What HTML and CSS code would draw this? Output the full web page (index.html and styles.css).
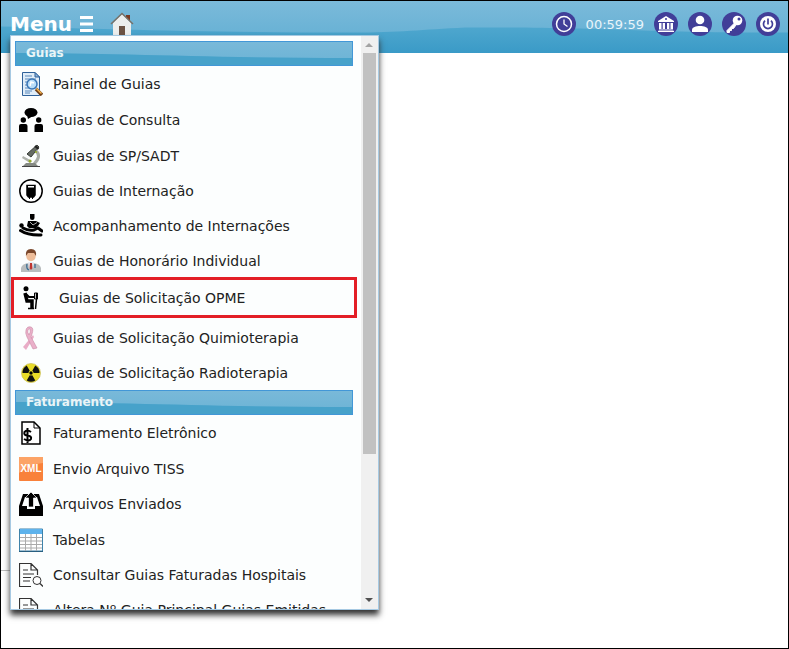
FILE: index.html
```html
<!DOCTYPE html>
<html lang="pt-BR">
<head>
    <meta charset="UTF-8">
    <meta name="viewport" content="width=device-width, initial-scale=1.0">
    <title>Menu</title>
    <link rel="stylesheet" href="styles.css">
</head>
<body>
<header class="topbar">
    <svg class="wave" viewBox="0 0 787 51" preserveAspectRatio="none" aria-hidden="true">
        <path d="M0 25C100 27 200 31 350 31C400 31 420 28 464 26C600 25 640 31 787 31V51H0Z" fill="url(#deep)"/>
        <defs>
            <linearGradient id="deep" gradientUnits="userSpaceOnUse" x1="0" y1="25" x2="0" y2="51">
                <stop offset="0" stop-color="#4fa7ce"/>
                <stop offset="1" stop-color="#3a9ac7"/>
            </linearGradient>
        </defs>
    </svg>
    <button class="menu-btn" type="button">Menu
        <svg width="13" height="16" viewBox="0 0 13 16"><path d="M0 1.5H13M0 8H13M0 14.5H13" stroke="#fff" stroke-width="3"/></svg>
    </button>
    <a class="home" href="#" aria-label="Home">
        <svg width="24" height="25" viewBox="0 0 24 25">
            <path d="M16 3H20V9L16 6Z" fill="#7b3a23"/>
            <path d="M3 11L12 2L21 11V25H3Z" fill="#eceeed"/>
            <path d="M1 12L12 1.500L23 12" fill="none" stroke="#777168" stroke-width="1.500"/>
            <path d="M9 14H15V25H9Z" fill="#6b5344"/>
        </svg>
    </a>
    <nav class="tools">
        <button type="button" class="round" aria-label="Tempo">
            <svg width="24" height="24" viewBox="0 0 24 24"><circle cx="12" cy="12" r="7.500" fill="none" stroke="#fff" stroke-width="1.500"/><path d="M12 7.500V12L15.500 14.500" fill="none" stroke="#fff" stroke-width="1.300"/></svg>
        </button>
        <span class="timer">00:59:59</span>
        <button type="button" class="round" aria-label="Empresa">
            <svg width="24" height="24" viewBox="0 0 24 24" fill="#fff"><path fill-rule="evenodd" d="M12 4L20 9V10H4V9ZM12 6A1 1 0 1 0 12 8A1 1 0 1 0 12 6Z"/><path d="M5 11H7.500V17H5ZM8.700 11H11V17H8.700ZM13 11H15.300V17H13ZM16.500 11H19V17H16.500ZM5 17.500H19V18.300H5ZM4 18.700H20V20H4Z"/></svg>
        </button>
        <button type="button" class="round" aria-label="Usuário">
            <svg width="24" height="24" viewBox="0 0 24 24" fill="#fff"><circle cx="12" cy="8" r="4.300"/><path d="M4 20V18C4 15 8 14 12 14S20 15 20 18V20Z"/></svg>
        </button>
        <button type="button" class="round" aria-label="Senha">
            <svg width="24" height="24" viewBox="0 0 24 24"><path d="M12.500 11L5 18.500V20.500H7.500V18.500H9.500V16.500H11.500L14 13" fill="#fff" stroke="#fff"/><circle cx="15.500" cy="8.500" r="4.800" fill="#fff"/><circle cx="17" cy="7" r="1.500" fill="#413e98"/></svg>
        </button>
        <button type="button" class="round" aria-label="Sair">
            <svg width="24" height="24" viewBox="0 0 24 24"><circle cx="12" cy="12" r="8" fill="#fff"/><path d="M9 8.700A4.500 4.500 0 1 0 15 8.700M12 6.500V12.500" fill="none" stroke="#413e98" stroke-width="1.700"/></svg>
        </button>
    </nav>
</header>
<hr class="edge">

<div class="panel">
    <div class="list">
        <h2 class="group"><svg class="wave" viewBox="0 0 338 23" preserveAspectRatio="none" aria-hidden="true"><path d="M0 11C100 11 200 16 338 16V23H0Z" fill="#47a2ca"/></svg><span>Guias</span></h2>
        <ul>
            <li><a class="item tall" href="#">
                <svg class="icon" viewBox="0 0 24 24"><path d="M3.500 .5H16L20.500 5V23.500H3.500Z" fill="#e0edf8" stroke="#2f6199"/><path d="M16 .5V5H20.500Z" fill="#8fb5dc" stroke="#2f6199"/><path d="M6 4H13M6 7H17M6 10H18M6 13H18M6 16H18M6 19H13M6 21H11" stroke="#5a89bb"/><circle cx="13" cy="12" r="5" fill="#b9ddf8" stroke="#3975b5" stroke-width="1.500"/><path d="M11 14L12 10L15 11" stroke="#fff" stroke-width="1.500" fill="none"/><path d="M17 17L23 23" stroke="#704019" stroke-width="3.500"/><path d="M17.500 16.500L22.500 21.500" stroke="#f6b34c" stroke-width="1.500"/></svg>
                Painel de Guias</a></li>
            <li><a class="item tall" href="#">
                <svg class="icon" viewBox="0 0 24 24"><ellipse cx="12" cy="4.500" rx="6.500" ry="4.500"/><path d="M8 7L9 11L14 8Z"/><circle cx="4.300" cy="12" r="2.700"/><circle cx="19.700" cy="12" r="2.700"/><path d="M0 24V18Q0 16 2 16H6.500Q8.500 16 8.500 18V24ZM15.500 24V18Q15.500 16 17.500 16H22Q24 16 24 18V24Z"/></svg>
                Guias de Consulta</a></li>
            <li><a class="item" href="#">
                <svg class="icon" viewBox="0 0 24 24"><path d="M18 1L20 3L12 13L8 10Z" fill="#666b65" stroke="#383d38"/><path d="M16 2L19.500 5" stroke="#222" stroke-width="2"/><path d="M17 7Q23 12 15 20" fill="none" stroke="#a8aca6" stroke-width="3"/><path d="M4 12L13 17L11 19L3 14Z" fill="#aeb2ac"/><path d="M7 19H16L20 23H3Z" fill="#858a84"/><path d="M3 22.500H21" stroke="#444"/><circle cx="11" cy="17" r="1.500" fill="#96ad25"/><circle cx="17" cy="8" r="1" fill="#96ad25"/></svg>
                Guias de SP/SADT</a></li>
            <li><a class="item" href="#">
                <svg class="icon" viewBox="0 0 24 24"><circle cx="12" cy="12" r="11.200" fill="#fff" stroke="#000" stroke-width="1.500"/><path d="M8 6.500H16V16L14.500 18H9.500L8 16Z" stroke="#000" stroke-width="1.500"/><path d="M9 7H15V8.500H9Z" fill="#fff"/><path d="M10.500 18V20M13.500 18V20" stroke="#000"/></svg>
                Guias de Internação</a></li>
            <li><a class="item" href="#">
                <svg class="icon" viewBox="0 0 24 24"><path d="M11 0H15.500V4Q15.500 6 13.200 6T11 4Z"/><path d="M9 7H17L21 9L19 12L17 14H10L8 12Z"/><path d="M11 8L14 11L18 8.500" fill="none" stroke="#fff" stroke-width=".7"/><circle cx="2.500" cy="11.500" r="2.200"/><path d="M4 14Q9 17 15 16L19 14L23 17" fill="none" stroke="#000" stroke-width="3" stroke-linecap="round" stroke-linejoin="round"/><path d="M1.500 16.500Q9 21.500 22 21" fill="none" stroke="#000" stroke-width="3" stroke-linecap="round"/></svg>
                Acompanhamento de Internações</a></li>
            <li><a class="item" href="#">
                <svg class="icon" viewBox="0 0 24 24"><path d="M2 23V19Q3 15 9 14H15Q21 15 22 19V23Z" fill="#b9bdbe"/><path d="M9 13H15L14 19H10Z" fill="#e7edf5"/><path d="M11 14H13L13.500 19L12 21L10.500 19Z" fill="#bf3530"/><path d="M8 15Q7 20 10 21M16 15V19" fill="none" stroke="#386b91" stroke-width="1.300"/><circle cx="12" cy="7.500" r="4.700" fill="#eebd99"/><path d="M7 7Q6 0 12 0T17 7L15 4H9Z" fill="#7a472b"/></svg>
                Guias de Honorário Individual</a></li>
            <li><a class="item marked" href="#">
                <svg class="icon" viewBox="0 0 24 24"><circle cx="7" cy="2.700" r="2.500"/><path d="M6 7L8 15H13V22" fill="none" stroke="#000" stroke-width="3.500"/><path d="M7 8L10 11H15" fill="none" stroke="#000" stroke-width="2"/><path d="M9 22.500H15M17.500 7V13L16.500 23" stroke="#000" stroke-width="1.500" fill="none"/><path d="M15.500 7H18.500V13H15.500Z" fill="none" stroke="#000"/></svg>
                Guias de Solicitação OPME</a></li>
            <li><a class="item" href="#">
                <svg class="icon" viewBox="0 0 24 24"><path d="M14 9L4 21L7 24L15 11Z" fill="#e9adc7"/><path d="M7 4Q8 0 12 1Q15 2 13 8L12 11L18 22L14 23L8 11Q6 7 7 4ZM9 4Q8 6 10 9Q12 6 11 3Q10 2 9 4Z" fill="#eab0c9" stroke="#c989a5" stroke-width=".6" fill-rule="evenodd"/></svg>
                Guias de Solicitação Quimioterapia</a></li>
            <li><a class="item" href="#">
                <svg class="icon" viewBox="0 0 24 24"><circle cx="12" cy="12" r="9.500" fill="#e9dc28" stroke="#c9bd54" stroke-width=".7"/><path d="M12 12L3.500 12A8.500 8.500 0 0 1 7.700 4.600ZM12 12L16.300 4.600A8.500 8.500 0 0 1 20.500 12ZM12 12L16.300 19.400A8.500 8.500 0 0 1 7.700 19.400Z" fill="#111"/><circle cx="12" cy="12" r="2.500" fill="#e9dc28"/><circle cx="12" cy="12" r="1.700"/></svg>
                Guias de Solicitação Radioterapia</a></li>
        </ul>
        <h2 class="group"><svg class="wave" viewBox="0 0 338 23" preserveAspectRatio="none" aria-hidden="true"><path d="M0 11C100 11 200 16 338 16V23H0Z" fill="#47a2ca"/></svg><span>Faturamento</span></h2>
        <ul>
            <li><a class="item tall" href="#">
                <svg class="icon" viewBox="0 0 24 24"><path d="M3 1H15L21 7V23H3Z" fill="#fff" stroke="#000" stroke-width="1.500"/><path d="M15 1V7H21" fill="none" stroke="#000"/><path d="M12 11Q8 8 5.500 11Q4.500 14 8 14.500Q13 15 12 18Q10 21 5 18M8.500 7V22" fill="none" stroke="#000" stroke-width="2"/></svg>
                Faturamento Eletrônico</a></li>
            <li><a class="item" href="#">
                <svg class="icon" viewBox="0 0 24 24"><rect width="24" height="24" rx="1" fill="#f9813a"/><path d="M0 1Q0 0 1 0H24V6Q10 7 0 16Z" fill="#fca366"/><text class="xml" x="12" y="15">XML</text></svg>
                Envio Arquivo TISS</a></li>
            <li><a class="item tall" href="#">
                <svg class="icon" viewBox="0 0 24 24"><path d="M4 2H9V5H6L3 14H8V17H16V14H21L18 5H15V2H20L24 14V24H0V14Z"/><path d="M12 0L18 6H14.500V15H9.500V6H6Z" stroke="#fff" stroke-width=".7"/></svg>
                Arquivos Enviados</a></li>
            <li><a class="item" href="#">
                <svg class="icon" viewBox="0 0 24 24"><path d="M.5 1H23.500V23H.5Z" fill="#fff" stroke="#3e83aa"/><path d="M1 1H23V6H1Z" fill="#5fb3ec"/><path d="M1 9.500H23M1 13H23M1 16.500H23M1 20H23M6.500 6V23M12 6V23M17.500 6V23" stroke="#aaa"/><path d="M0 23.500H24" stroke="#285f80"/></svg>
                Tabelas</a></li>
            <li><a class="item" href="#">
                <svg class="icon" viewBox="0 0 24 24"><path d="M12 23.500H.5V.5H12L18.500 7V12M12 .5V7H18.500M4 7H9M4 11H15M4 14.500H12M4 18H11" fill="none" stroke="#333" stroke-width="1.200"/><circle cx="18" cy="17.500" r="4" fill="#fff" stroke="#333"/><path d="M21 20.500L24 23.500" stroke="#333" stroke-width="1.300"/></svg>
                Consultar Guias Faturadas Hospitais</a></li>
            <li><a class="item" href="#">
                <svg class="icon" viewBox="0 0 24 24"><path d="M12 23.500H.5V.5H12L18.500 7V23.500H12M12 .5V7H18.500M4 7H9M4 11H15M4 14.500H12M4 18H11" fill="none" stroke="#333" stroke-width="1.200"/></svg>
                Altera Nº Guia Principal Guias Emitidas</a></li>
        </ul>
    </div>
    <div class="scroll" aria-hidden="true">
        <svg width="16" height="17" viewBox="0 0 16 17"><path d="M4 11L8 7L12 11Z" fill="#a3a3a3"/></svg>
        <div class="thumb"></div>
        <svg class="down" width="16" height="17" viewBox="0 0 16 17"><path d="M4 6L8 10L12 6Z" fill="#505050"/></svg>
    </div>
</div>
</body>
</html>
```
FILE: styles.css
```css
*{
    margin: 0;
    padding: 0;
    box-sizing: border-box;
    list-style: none;
}
body{
    position: relative;
    min-height: 100vh;
    border: 1px solid #000;
    background: #fff;
    font-family: Verdana, "DejaVu Sans", sans-serif;
    font-size: 14px;
    color: #222;
}
button{
    border: 0;
    background: none;
    font-family: inherit;
    color: #fff;
}
a{
    color: inherit;
    text-decoration: none;
}
svg{
    display: block;
}

/* top bar */
.topbar{
    position: relative;
    display: flex;
    align-items: center;
    height: 52px;
    padding: 0 8px 6px 9px;
    background: linear-gradient(#7bbada, #69b2d5 32px);
}
.wave{
    position: absolute;
    left: 0;
    top: 0;
    width: 100%;
    height: 100%;
}
.menu-btn,.home,.tools{
    position: relative;
}
.menu-btn{
    display: flex;
    align-items: center;
    gap: 8px;
    font-size: 20px;
    font-weight: bold;
}
.home{
    margin-left: 17px;
}
.tools{
    display: flex;
    align-items: center;
    gap: 10px;
    margin-left: auto;
}
.round{
    width: 24px;
    height: 24px;
    border-radius: 50%;
    background: #413e98;
}
.timer{
    font-size: 13px;
    color: #e9f5fb;
}
.edge{
    position: absolute;
    left: 0;
    bottom: 77px;
    width: 10px;
    border: 0;
    border-top: 1px solid #bbb;
}

/* drop-down panel */
.panel{
    position: absolute;
    left: 9px;
    top: 34px;
    bottom: 38px;
    display: flex;
    width: 369px;
    border: 1px solid #a6c9e2;
    background: #fcfefe;
    box-shadow: 0 5px 6px #333;
}
.list{
    flex: 1;
    padding: 5px 8px 0 4px;
    overflow: hidden;
}
.group{
    position: relative;
    height: 25px;
    padding-left: 10px;
    border: 1px solid #4297d7;
    background: linear-gradient(#79b9d9, #6bb3d5);
    font-size: 12px;
    line-height: 23px;
    color: #eaf5f7;
}
.group span{
    position: relative;
}
.item{
    display: flex;
    align-items: center;
    gap: 10px;
    height: 35px;
    padding-left: 4px;
    white-space: nowrap;
}
.tall{
    height: 36px;
}
.icon{
    flex: none;
    width: 24px;
    height: 24px;
}
.xml{
    font: bold 10px "Liberation Sans", sans-serif;
    text-anchor: middle;
    fill: #fff;
}
.marked{
    gap: 16px;
    height: 41px;
    margin: -1px -4px 2px;
    padding-left: 5px;
    border: 3px solid #e31e26;
}
.scroll{
    display: flex;
    flex-direction: column;
    width: 17px;
    background: #f0f0f0;
}
.thumb{
    height: 70%;
    margin: 0 2px;
    background: #c1c1c1;
}
.down{
    margin-top: auto;
}
```
